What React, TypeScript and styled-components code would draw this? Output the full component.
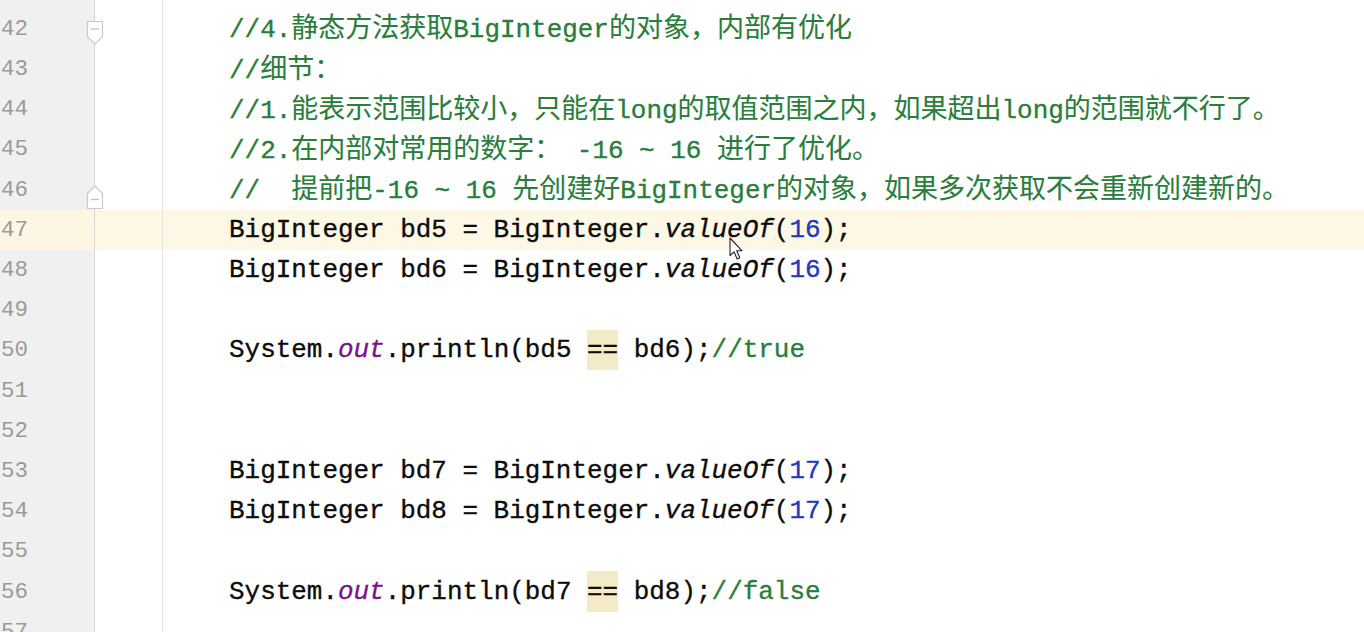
import React from "react";
import styled, { createGlobalStyle } from "styled-components";

const Global = createGlobalStyle`
  html, body { margin: 0; padding: 0; background: #ffffff; }
  body { width: 1364px; height: 632px; overflow: hidden; }
  #root { width: 1364px; height: 632px; overflow: hidden; }
`;

const Editor = styled.div`
  display: flex;
  flex-direction: column;
  margin-top: -31.4px;
`;

const Row = styled.div<{ $current?: boolean }>`
  display: grid;
  grid-template-columns: 95px 68px 1fr;
  height: 40.2px;
  background: ${(p) => (p.$current ? "#fdf8e5" : "#ffffff")};
`;

const LineNo = styled.div<{ $current?: boolean }>`
  position: relative;
  background: ${(p) => (p.$current ? "#fcf6e3" : "#f0f0f0")};
  border-right: 1px solid #d6d6d6;
  display: flex;
  align-items: center;
  padding-left: 1px;
  font-family: "Liberation Mono", "DejaVu Sans Mono", monospace;
  font-size: 22.5px;
  color: #9a9a9a;
`;

const FoldCell = styled.div`
  border-right: 1px solid #e3e3e3;
`;

const Code = styled.div`
  display: flex;
  align-items: center;
  padding-left: 66px;
  white-space: pre;
  font-family: "Liberation Mono", "DejaVu Sans Mono", monospace;
  font-size: 25.95px;
  color: #0c0c0c;
  -webkit-text-stroke: 0.35px currentColor;
  position: relative;
`;

const Cjk = styled.span`
  font-family: "Noto Sans CJK SC", sans-serif;
  font-size: 27px;
  font-weight: 400;
  line-height: 1;
  -webkit-text-stroke: 0.1px currentColor;
`;

const Comment = styled.span`
  color: #2a7d3c;
`;

const Num = styled.span`
  color: #2139b8;
`;

const Field = styled.span`
  color: #7a138c;
  font-style: italic;
`;

const Method = styled.span`
  font-style: italic;
`;

const Match = styled.span`
  background: #f4eac5;
  display: inline-flex;
  align-items: center;
  height: 40.2px;
`;

const FoldMark = styled.svg<{ $top: number }>`
  position: absolute;
  left: 86px;
  top: ${(p) => p.$top}px;
  width: 18px;
  height: 25px;
  overflow: visible;
`;

const Cursor = styled.svg`
  position: absolute;
  left: 566px;
  top: 27px;
  width: 15px;
  height: 24px;
  overflow: visible;
  -webkit-text-stroke: 0;
`;

type Tok =
  | { t: "p"; s: string }
  | { t: "c"; s: string }
  | { t: "n"; s: string }
  | { t: "f"; s: string }
  | { t: "m"; s: string }
  | { t: "eq"; s: string };

const cjkRe = /([\u3000-\u303f\u4e00-\u9fff\uff00-\uffef]+)/;

function mixed(s: string) {
  return s.split(cjkRe).map((part, i) =>
    cjkRe.test(part) ? <Cjk key={i}>{part}</Cjk> : <React.Fragment key={i}>{part}</React.Fragment>
  );
}

const bigLine = (v: string, n: string): Tok[] => [
  { t: "p", s: `BigInteger ${v} = BigInteger.` },
  { t: "m", s: "valueOf" },
  { t: "p", s: "(" },
  { t: "n", s: n },
  { t: "p", s: ");" },
];

const printLine = (a: string, b: string, res: string): Tok[] => [
  { t: "p", s: "System." },
  { t: "f", s: "out" },
  { t: "p", s: `.println(${a} ` },
  { t: "eq", s: "==" },
  { t: "p", s: ` ${b});` },
  { t: "c", s: `//${res}` },
];

const lines: {
  no: number | null;
  toks: Tok[];
  fold?: "open" | "close";
  current?: boolean;
  cursor?: boolean;
}[] = [
  { no: null, toks: [] },
  { no: 42, toks: [{ t: "c", s: "//4.静态方法获取BigInteger的对象，内部有优化" }], fold: "open" },
  { no: 43, toks: [{ t: "c", s: "//细节：" }] },
  { no: 44, toks: [{ t: "c", s: "//1.能表示范围比较小，只能在long的取值范围之内，如果超出long的范围就不行了。" }] },
  { no: 45, toks: [{ t: "c", s: "//2.在内部对常用的数字： -16 ~ 16 进行了优化。" }] },
  { no: 46, toks: [{ t: "c", s: "//  提前把-16 ~ 16 先创建好BigInteger的对象，如果多次获取不会重新创建新的。" }], fold: "close" },
  { no: 47, toks: bigLine("bd5", "16"), current: true, cursor: true },
  { no: 48, toks: bigLine("bd6", "16") },
  { no: 49, toks: [] },
  { no: 50, toks: printLine("bd5", "bd6", "true") },
  { no: 51, toks: [] },
  { no: 52, toks: [] },
  { no: 53, toks: bigLine("bd7", "17") },
  { no: 54, toks: bigLine("bd8", "17") },
  { no: 55, toks: [] },
  { no: 56, toks: printLine("bd7", "bd8", "false") },
  { no: 57, toks: [] },
];

function renderTok(tok: Tok, i: number) {
  switch (tok.t) {
    case "c":
      return <Comment key={i}>{mixed(tok.s)}</Comment>;
    case "n":
      return <Num key={i}>{tok.s}</Num>;
    case "f":
      return <Field key={i}>{tok.s}</Field>;
    case "m":
      return <Method key={i}>{tok.s}</Method>;
    case "eq":
      return <Match key={i}>{tok.s}</Match>;
    default:
      return <React.Fragment key={i}>{tok.s}</React.Fragment>;
  }
}

function Fold({ kind }: { kind: "open" | "close" }) {
  if (kind === "open") {
    return (
      <FoldMark $top={12} viewBox="0 0 18 25">
        <path d="M1.5 0.5 H16.5 V15.5 L9 23 L1.5 15.5 Z" fill="#ffffff" stroke="#c9c9c9" strokeWidth="1.2" />
        <line x1="5" y1="8" x2="13" y2="8" stroke="#c4c4c4" strokeWidth="1.4" />
      </FoldMark>
    );
  }
  return (
    <FoldMark $top={14} viewBox="0 0 18 25">
      <path d="M1.5 24.5 H16.5 V9.5 L9 2 L1.5 9.5 Z" fill="#ffffff" stroke="#c9c9c9" strokeWidth="1.2" />
      <line x1="5" y1="15.5" x2="13" y2="15.5" stroke="#c4c4c4" strokeWidth="1.4" />
    </FoldMark>
  );
}

export default function App() {
  return (
    <>
      <Global />
      <Editor>
        {lines.map((l, idx) => (
          <Row key={idx} $current={l.current}>
            <LineNo $current={l.current}>
              {l.no}
              {l.fold && <Fold kind={l.fold} />}
            </LineNo>
            <FoldCell />
            <Code>
              {l.toks.map(renderTok)}
              {l.cursor && (
                <Cursor viewBox="0 0 15 24">
                  <path
                    d="M1 1 L1 18.5 L5 14.8 L8.2 22 L10.8 20.8 L7.7 13.8 L13 13.8 Z"
                    fill="#ffffff"
                    stroke="#222222"
                    strokeWidth="1.1"
                    strokeLinejoin="round"
                  />
                </Cursor>
              )}
            </Code>
          </Row>
        ))}
      </Editor>
    </>
  );
}
